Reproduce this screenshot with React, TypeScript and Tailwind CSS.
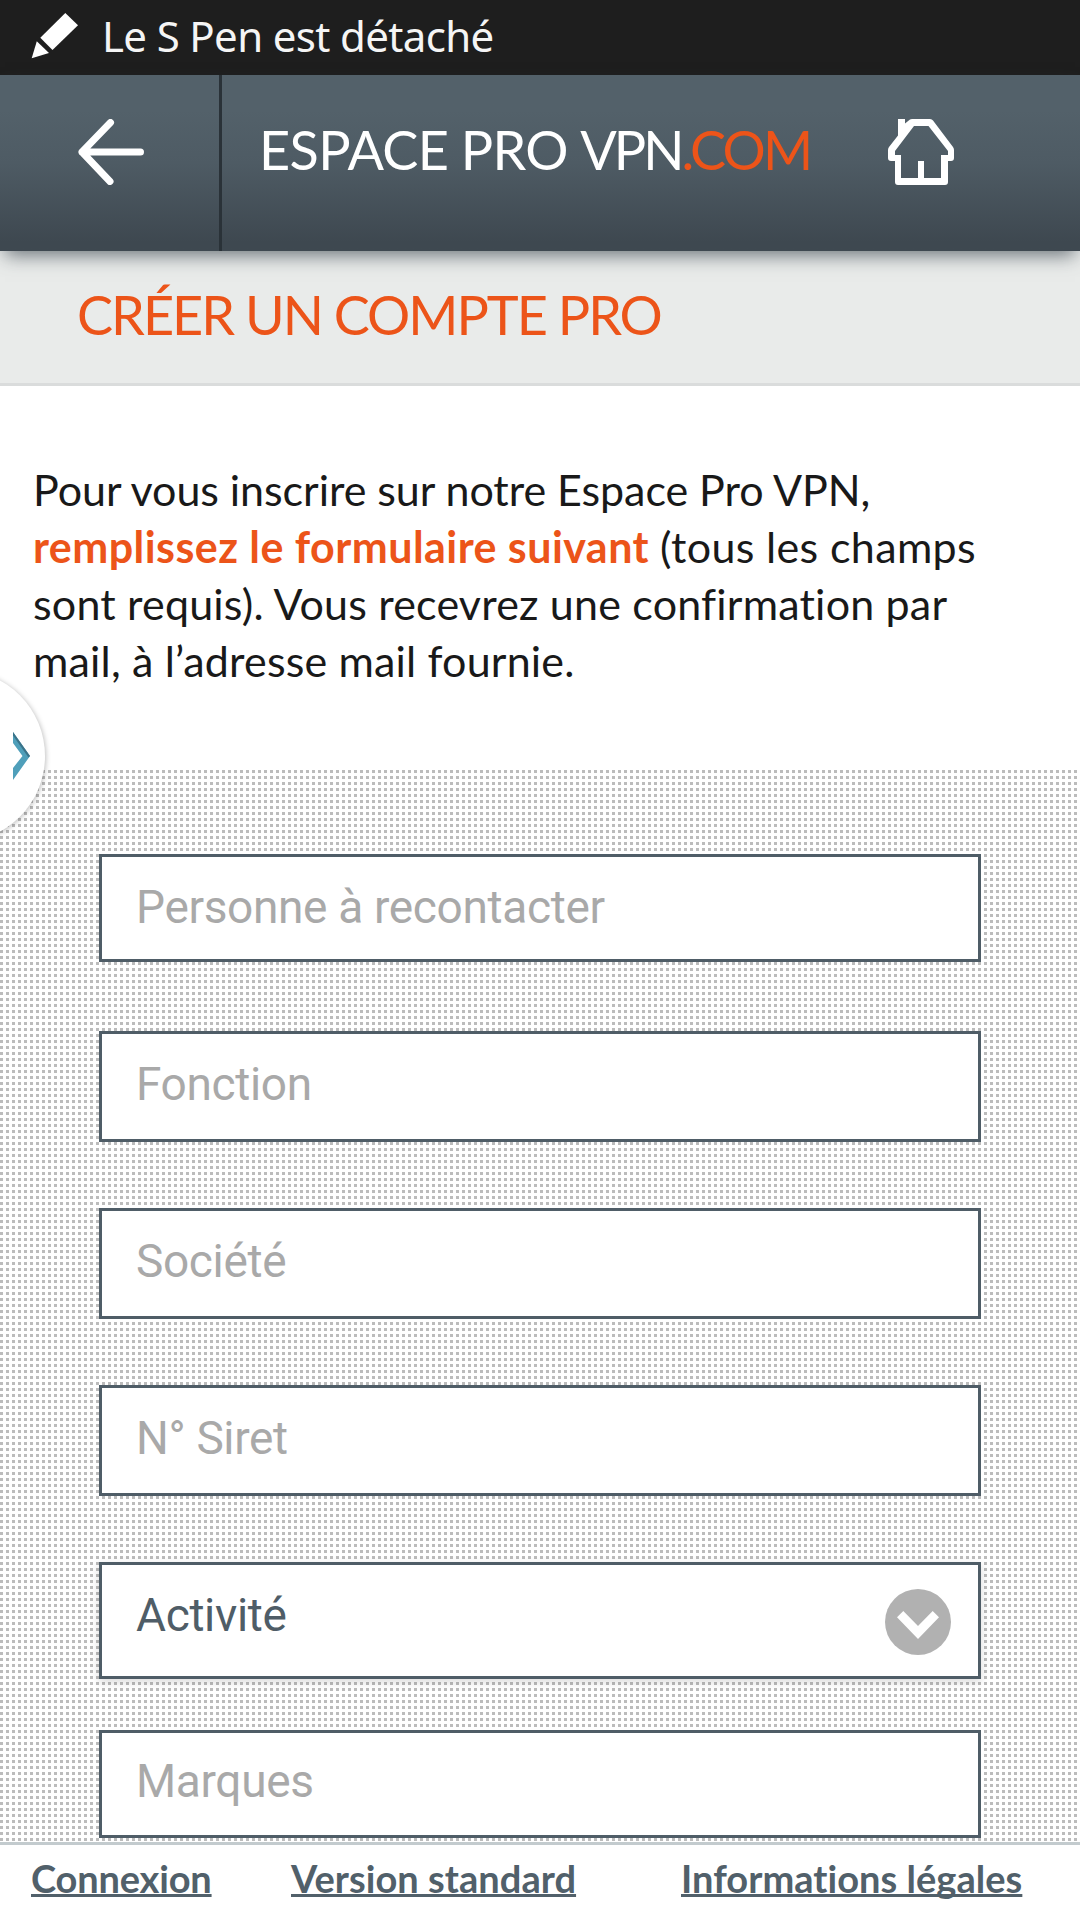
import { useState } from 'react';

interface Field {
  id: string;
  label: string;
  className: string;
}

const FIELDS: Field[] = [
  { id: 'contact', label: 'Personne à recontacter', className: 'h-[108px] mb-[69px] pt-[23px] pb-[25px]' },
  { id: 'fonction', label: 'Fonction', className: 'h-[111px] mb-[66px] pt-[23px] pb-[28px]' },
  { id: 'societe', label: 'Société', className: 'h-[111px] mb-[66px] pt-[23px] pb-[28px]' },
  { id: 'siret', label: 'N° Siret', className: 'h-[111px] mb-[66px] pt-[23px] pb-[28px]' },
];

const BRANDS_FIELD: Field = { id: 'marques', label: 'Marques', className: 'h-[108px] pt-[21px] pb-[27px]' };

function PenIcon() {
  return (
    <svg className="ml-[30px] mt-3 shrink-0" width="50" height="48" viewBox="30 12 50 48" fill="#fff">
      <path d="M65.3 13 78 25.3 52.5 50 40.3 37.7Z" />
      <path d="M36.8 41.3 49 53 31.7 58.2Z" />
    </svg>
  );
}

function BackIcon() {
  return (
    <svg width="66" height="66" viewBox="0 0 66 66" fill="none" stroke="#fff" strokeWidth="7" strokeLinecap="round" strokeLinejoin="round">
      <path d="M32.5 3.5 4 33 32 62.5M4 33H62.5" />
    </svg>
  );
}

function HomeIcon() {
  return (
    <svg width="66" height="66" viewBox="0 0 66 66" fill="#fff">
      <path
        fillRule="evenodd"
        d="M10 0H17V4.5L22 .5Q22.8 0 24 0H42Q44 0 45 1.5L65 28Q66 29.5 66 31V39Q66 42 63 42H60V63Q60 66 57 66H10Q7 66 7 63V42H3Q0 42 0 39V31Q0 29.5 1 28L10 16.5ZM26 7 7 32V36H13V59H30V42H36V59H53V36H60V32L40.500 7Z"
      />
    </svg>
  );
}

function SelectIcon() {
  return (
    <svg className="shrink-0" width="66" height="66" viewBox="0 0 66 66">
      <circle cx="33" cy="33" r="33" fill="#b1b1b1" />
      <path d="M12 28.3 18.3 22 33 37 47.7 22 54 28.3 33 50Z" fill="#fff" />
    </svg>
  );
}

function TextField({ field }: { field: Field }) {
  const [value, setValue] = useState('');

  return (
    <input
      id={field.id}
      type="text"
      value={value}
      placeholder={field.label}
      onChange={(e) => setValue(e.target.value)}
      className={`block w-full shrink-0 border-[3px] border-[#4f5d67] bg-white px-[34px] font-['Roboto',sans-serif] text-[46px] leading-[54px] tracking-[-0.34px] text-[#4f5d67] outline-none placeholder:text-[#a9a9a9] ${field.className}`}
    />
  );
}

export default function App() {
  return (
    <div className="relative flex h-[1920px] w-[1080px] flex-col overflow-hidden bg-white font-['Lato',sans-serif]">
      {/* Status bar */}
      <div className="flex h-[75px] shrink-0 bg-[#1e1e1e]">
        <PenIcon />
        <span className="ml-[22px] mt-[7px] font-['Noto_Sans',sans-serif] text-[42px] leading-[57px] tracking-[-0.65px] whitespace-nowrap text-[#f5f5f5]">
          Le S Pen est détaché
        </span>
      </div>

      {/* Header */}
      <header className="relative z-10 flex h-[176px] shrink-0 bg-linear-to-b from-[#53616a] from-20% via-[#4e5b64] via-50% to-[#3e4850] to-95% shadow-[0_9px_18px_-5px_rgba(62,72,80,0.75)]">
        <button className="flex w-[222px] shrink-0 items-start border-r-[3px] border-[#2a3238] pt-[44px] pl-[78px]">
          <BackIcon />
        </button>
        <h1 className="pt-[42px] pl-[37px] text-[54px] leading-[65px] tracking-[-0.6px] [word-spacing:-1px] whitespace-nowrap text-white">
          ESPACE PRO <span className="tracking-[-3px]">VPN</span>
          <span className="tracking-[-2.8px] text-[#ec5419]">.COM</span>
        </h1>
        <button className="absolute top-[44px] right-[126px]">
          <HomeIcon />
        </button>
      </header>

      {/* Page title */}
      <div className="h-[135px] shrink-0 border-b-[3px] border-[#dadcdc] bg-[#e9ebea] pt-[31px] pl-[77px]">
        <h2 className="text-[54px] leading-[65px] tracking-[-2px] whitespace-nowrap text-[#ec5419]">
          CRÉER UN COMPTE PRO
        </h2>
      </div>

      {/* Intro */}
      <p className="h-[384px] shrink-0 pt-[75px] pl-[33px] text-[43px] leading-[57px] whitespace-nowrap text-[#191919]">
        <span className="tracking-[-0.05px]">Pour vous inscrire sur notre Espace Pro VPN,</span>
        <br />
        <strong className="font-bold tracking-[0.45px] text-[#ec5419]">remplissez le formulaire suivant</strong>{' '}
        <span className="tracking-[0.35px]">(tous les champs</span>
        <br />
        <span className="tracking-[0.19px]">sont requis). Vous recevrez une confirmation par</span>
        <br />
        <span className="tracking-[0.17px]">mail, à l’adresse mail fournie.</span>
      </p>

      {/* Form */}
      <form className="flex h-[1072px] shrink-0 flex-col bg-white bg-[conic-gradient(from_270deg_at_3px_3px,#bcbcbc_90deg,transparent_0)] bg-[length:6px_6px] px-[99px] pt-[84px]">
        {FIELDS.map((field) => (
          <TextField key={field.id} field={field} />
        ))}
        <button
          type="button"
          className="mb-[51px] flex h-[117px] shrink-0 items-start justify-between border-[3px] border-[#4f5d67] bg-white pt-[23px] pr-[27px] pl-[34px] font-['Roboto',sans-serif] text-[46px] leading-[54px] tracking-[-0.34px] text-[#4f5d67] shadow-[0_3px_9px_rgba(0,0,0,0.15)]"
        >
          <span>Activité</span>
          <span className="mt-px">
            <SelectIcon />
          </span>
        </button>
        <TextField field={BRANDS_FIELD} />
      </form>

      {/* Footer */}
      <footer className="flex h-[78px] shrink-0 items-start border-t-[3px] border-[#c3cbce] bg-white pt-[10px] pl-[31px] text-[38px] leading-[46px] font-bold whitespace-nowrap text-[#51606a]">
        <a className="w-[260px] tracking-[-0.18px] underline decoration-[3px] underline-offset-1 [text-decoration-skip-ink:none]">
          Connexion
        </a>
        <a className="w-[390px] tracking-[0.05px] underline decoration-[3px] underline-offset-1 [text-decoration-skip-ink:none]">
          Version standard
        </a>
        <a className="tracking-[0.04px] underline decoration-[3px] underline-offset-1 [text-decoration-skip-ink:none]">
          Informations légales
        </a>
      </footer>

      {/* Side panel handle */}
      <button className="absolute top-[670px] left-[-127px] z-20 size-[172px] rounded-full bg-white shadow-[1px_1px_5px_rgba(0,0,0,0.25)]">
        <svg className="ml-[140px]" width="17" height="48" viewBox="0 0 17 48">
          <path d="M0 0 17 24 0 48V36L9.5 24 0 11Z" fill="#4f9fba" />
          <path d="M0 0 17 24 15.5 25.5 0 3.5Z" fill="#3b7389" />
        </svg>
      </button>
    </div>
  );
}
